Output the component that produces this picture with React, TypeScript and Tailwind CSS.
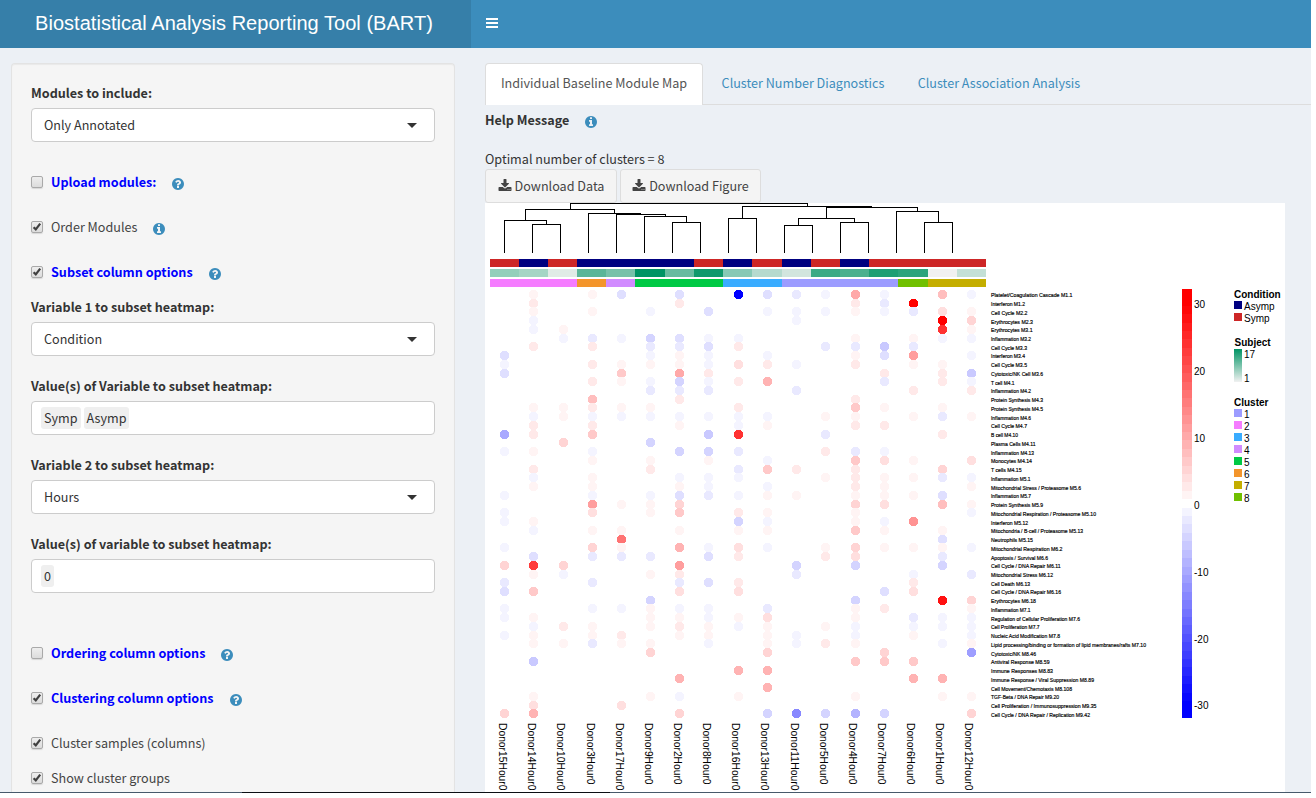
import type { ReactNode } from "react";

const INFO =
  "M1152 1376v-160q0-14-9-23t-23-9h-96v-512q0-14-9-23t-23-9h-320q-14 0-23 9t-9 23v160q0 14 9 23t23 9h96v320h-96q-14 0-23 9t-9 23v160q0 14 9 23t23 9h448q14 0 23-9t9-23zm-128-896v-160q0-14-9-23t-23-9h-192q-14 0-23 9t-9 23v160q0 14 9 23t23 9h192q14 0 23-9t9-23zm640 416q0 209-103 385.5t-279.5 279.5-385.5 103-385.5-103-279.5-279.5-103-385.5 103-385.5 279.5-279.5 385.5-103 385.5 103 279.5 279.5 103 385.5z";
const QUESTION =
  "M1024 1376v-192q0-14-9-23t-23-9h-192q-14 0-23 9t-9 23v192q0 14 9 23t23 9h192q14 0 23-9t9-23zm256-672q0-88-55.5-163t-138.5-116-170-41q-243 0-371 213-15 24 8 42l132 100q7 6 19 6 16 0 25-12 53-68 86-92 34-24 86-24 48 0 85.5 26t37.5 59q0 38-20 61t-68 45q-63 28-115.5 86.5t-52.5 125.5v36q0 14 9 23t23 9h192q14 0 23-9t9-23q0-19 21.5-49.5t54.5-49.5q32-18 49-28.5t46-35 44.5-48 28-60.5 12.5-81zm384 192q0 209-103 385.5t-279.5 279.5-385.5 103-385.5-103-279.5-279.5-103-385.5 103-385.5 279.5-279.5 385.5-103 385.5 103 279.5 279.5 103 385.5z";
const DOWNLOAD =
  "M1344 1344q0-26-19-45t-45-19-45 19-19 45 19 45 45 19 45-19 19-45zm256 0q0-26-19-45t-45-19-45 19-19 45 19 45 45 19 45-19 19-45zm128-224v320q0 40-28 68t-68 28h-1472q-40 0-68-28t-28-68v-320q0-40 28-68t68-28h465l135 136q58 56 136 56t136-56l136-136h464q40 0 68 28t28 68zm-325-569q17 41-14 70l-448 448q-18 19-45 19t-45-19l-448-448q-31-29-14-70 17-39 59-39h256v-448q0-26 19-45t45-19h256q26 0 45 19t19 45v448h256q42 0 59 39z";

function Icon({ d, className }: { d: string; className: string }) {
  return (
    <svg viewBox="0 0 1792 1792" fill="currentColor" className={className}>
      <path d={d} />
    </svg>
  );
}

function Check({
  on,
  strong,
  icon,
  className,
  children,
}: {
  on?: boolean;
  strong?: boolean;
  icon?: string;
  className: string;
  children: ReactNode;
}) {
  return (
    <div className={`flex h-5 shrink-0 items-center ${className}`}>
      <span className="flex h-3 w-3 shrink-0 items-center justify-center rounded-[2px] border border-[#a9a9a9] bg-linear-to-b from-[#eeeeee] to-[#dcdcdc] shadow-[0_1px_1px_#d8d8d8]">
        {on && (
          <svg viewBox="0 0 10 10" className="h-[10px] w-[10px]">
            <path d="M1.6 5.2 3.8 7.4 8.2 1.6" fill="none" stroke="#404040" strokeWidth="2.2" />
          </svg>
        )}
      </span>
      <span
        className={
          strong
            ? "ml-2 text-[12.6px] font-bold whitespace-nowrap text-[#0000ff]"
            : "ml-2 text-[12.6px] whitespace-nowrap text-[#444444]"
        }
      >
        {children}
      </span>
      {icon && <Icon d={icon} className="mt-[4px] ml-[15px] h-[14px] w-[14px] text-[#3c8dbc]" />}
    </div>
  );
}

function Field({
  label,
  value,
  tags,
  className,
}: {
  label: string;
  value?: string;
  tags?: string[];
  className: string;
}) {
  return (
    <div className={`shrink-0 ${className}`}>
      <div className="mb-[5px] h-5 text-[12.6px] leading-5 font-bold whitespace-nowrap text-[#333333]">{label}</div>
      <div className="flex h-[34px] items-center rounded-[4px] border border-[#cccccc] bg-white text-[12.6px] text-[#333333]">
        {value && (
          <>
            <span className="ml-3">{value}</span>
            <span className="mr-[17px] ml-auto h-0 w-0 border-x-[5px] border-t-[5px] border-x-transparent border-t-[#333333]" />
          </>
        )}
        {tags && (
          <div className="ml-[9px] flex gap-[3px]">
            {tags.map((t) => (
              <span key={t} className="h-[22px] rounded-[3px] bg-[#efefef] px-[3px] leading-[22px]">
                {t}
              </span>
            ))}
          </div>
        )}
      </div>
    </div>
  );
}

const ROWS: [string, number][] = [
  ["Platelet/Coagulation Cascade M1.1", 81.5],
  ["Interferon M1.2", 34],
  ["Cell Cycle M2.2", 36.5],
  ["Erythrocytes M2.3", 42],
  ["Erythrocytes M3.1", 41.5],
  ["Inflammation M3.2", 40],
  ["Cell Cycle M3.3", 36],
  ["Interferon M3.4", 34],
  ["Cell Cycle M3.5", 36],
  ["Cytotoxic/NK Cell M3.6", 52],
  ["T cell M4.1", 23.5],
  ["Inflammation M4.2", 40],
  ["Protein Synthesis M4.3", 52],
  ["Protein Synthesis M4.5", 52],
  ["Inflammation M4.6", 40],
  ["Cell Cycle M4.7", 36],
  ["B cell M4.10", 27],
  ["Plasma Cells M4.11", 44.5],
  ["Inflammation M4.13", 43],
  ["Monocytes M4.14", 41],
  ["T cells M4.15", 30.5],
  ["Inflammation M5.1", 39.5],
  ["Mitochondrial Stress / Proteasome M5.6", 90],
  ["Inflammation M5.7", 40],
  ["Protein Synthesis M5.9", 52],
  ["Mitochondrial Respiration / Proteasome M5.10", 105],
  ["Interferon M5.12", 37],
  ["Mitochondria / B-cell / Proteasome M5.13", 92],
  ["Neutrophils M5.15", 42],
  ["Mitochondrial Respiration M6.2", 71.5],
  ["Apoptosis / Survival M6.6", 57],
  ["Cell Cycle / DNA Repair M6.11", 69.5],
  ["Mitochondrial Stress M6.12", 62],
  ["Cell Death M6.13", 39],
  ["Cell Cycle / DNA Repair M6.16", 70],
  ["Erythrocytes M6.18", 45],
  ["Inflammation M7.1", 39.5],
  ["Regulation of Cellular Proliferation M7.6", 89],
  ["Cell Proliferation M7.7", 48.5],
  ["Nucleic Acid Modification M7.8", 69],
  ["Lipid processing/binding or formation of lipid membranes/rafts M7.10", 155],
  ["Cytotoxic/NK M8.46", 45],
  ["Antiviral Response M8.59", 58.5],
  ["Immune Responses M8.83", 62],
  ["Immune Response / Viral Suppression M8.89", 103],
  ["Cell Movement/Chemotaxis M8.108", 81],
  ["TGF-Beta / DNA Repair M9.20", 68],
  ["Cell Proliferation / Immunosuppression M9.35", 105.5],
  ["Cell Cycle / DNA Repair / Replication M9.42", 99],
];

const COLS = [
  { id: 15, x: 504, subject: "#93cfbb", symp: true, dots: "7:-3 8:-1 9:-3 16:-8 18:-1 23:-1 25:-1 26:-1 29:-1 31:4 33:-2 34:-3 36:-1 37:-1 39:-1 48:4" },
  { id: 14, x: 533, subject: "#a5d5c5", symp: false, dots: "0:1 1:2 2:1 3:-1 4:-1 6:2 13:1 14:-1 15:2 16:2 18:1 20:2 21:-1 22:1 26:1 27:-1 30:-3 31:18 32:1 34:5 37:1 38:-1 39:1 40:1 42:-5 46:1 47:3 48:7" },
  { id: 10, x: 563, subject: "#e0ebe6", symp: true, dots: "4:1 5:-1 13:1 14:1 17:4 31:4 32:-1 38:2 40:1" },
  { id: 3, x: 592, subject: "#5ab698", symp: false, dots: "0:1 2:1 5:-2 6:2 8:2 10:2 12:6 13:2 14:-1 15:2 16:5 18:-1 19:1 21:1 22:1 23:-1 24:9 25:3 27:1 29:4 30:-2 33:-2 36:-1 38:1 39:1 40:-2" },
  { id: 17, x: 621, subject: "#77c1aa", symp: false, dots: "0:-3 5:-1 8:1 9:5 10:1 13:1 14:-1 24:1 27:1 28:13 29:1 30:-2 36:-1 39:2 40:1 47:3" },
  { id: 9, x: 650, subject: "#009464", symp: false, dots: "2:-1 5:-4 6:-2 7:-1 8:1 10:-1 11:-2 13:1 14:-1 17:-4 19:1 20:2 23:-1 24:1 25:1 30:-2 32:1 35:-4 36:1 37:1 38:1 40:1 41:4 46:1" },
  { id: 2, x: 679, subject: "#68bba0", symp: false, dots: "0:-3 1:2 5:-3 6:-2 7:1 8:1 9:8 10:-4 11:-2 12:2 14:-1 15:1 18:-4 21:-1 22:1 23:-3 24:4 25:5 27:1 29:7 31:9 32:2 33:-2 34:3 36:-1 37:1 38:2 39:1 44:7 46:-1 48:4" },
  { id: 8, x: 708, subject: "#0f996c", symp: true, dots: "2:-3 5:-1 6:-3 7:-1 8:-1 9:2 10:-1 11:-2 14:-1 16:-5 18:-4 19:1 21:-1 22:-1 23:-2 29:-1 30:-3 33:-3 36:-1 37:-1 38:1 39:1 40:-1" },
  { id: 16, x: 738, subject: "#87c9b5", symp: false, dots: "0:-25 5:-1 6:2 8:3 10:2 13:2 14:-1 15:-1 16:19 18:-2 20:-2 21:-1 23:-1 25:2 26:-4 27:1 29:3 30:2 33:2 34:3 37:1 38:-1 43:7 46:1" },
  { id: 13, x: 767, subject: "#b5dace", symp: true, dots: "0:-3 2:-1 7:-1 8:2 10:7 14:-1 15:1 19:-1 20:5 22:-1 23:1 25:1 26:-1 27:1 29:-1 36:-2 37:3 38:1 39:1 40:1 41:4 43:7 45:7 48:-4" },
  { id: 11, x: 796, subject: "#d2e5de", symp: false, dots: "0:-2 2:-1 3:-1 8:-1 11:-2 20:2 23:1 31:-4 32:-2 39:-1 40:-1 48:-11" },
  { id: 5, x: 825, subject: "#3baa85", symp: true, dots: "0:-1 2:-1 6:-2 14:1 16:-2 18:2 21:1 29:1 30:2 38:1 40:2 48:-4" },
  { id: 4, x: 855, subject: "#4bb08f", symp: false, dots: "0:8 1:2 2:1 5:1 6:-2 7:1 8:2 12:2 13:5 14:1 15:2 18:-2 19:5 20:2 21:2 22:2 23:1 24:4 25:1 26:1 27:5 29:4 30:3 31:-4 35:-4 36:1 37:1 38:-1 39:-1 40:1 42:5 46:1 48:-7" },
  { id: 7, x: 884, subject: "#1e9f74", symp: true, dots: "0:-1 1:-2 2:-1 6:-5 7:-3 9:2 10:-2 13:1 15:2 18:-1 19:3 21:1 22:1 23:1 24:3 26:-1 27:1 29:1 34:-3 36:2 41:4 42:5 48:-4" },
  { id: 6, x: 913, subject: "#2ca47c", symp: true, dots: "1:24 2:-2 5:1 6:-2 7:9 8:1 11:2 14:1 19:1 21:1 23:1 26:10 29:1 32:-1 33:2 34:3 37:-2 38:-1 39:1 42:5 44:7" },
  { id: 1, x: 942, subject: "#f1f1f1", symp: true, dots: "0:6 2:3 3:25 4:19 5:-1 8:1 9:2 10:2 13:1 14:-2 16:2 20:4 21:-2 23:-3 24:6 27:1 28:-3 29:1 30:-2 31:-4 35:22 37:-1 38:-1 40:-1 44:7 46:1" },
  { id: 12, x: 971, subject: "#c4e0d6", symp: true, dots: "0:-1 2:1 3:4 4:1 5:-1 7:-1 9:-5 10:-1 11:2 14:1 19:3 21:-1 22:1 24:1 25:-1 29:-1 32:-2 35:4 36:1 37:-1 38:-1 39:-1 40:1 41:-9 46:1 48:4" },
];

const EDGES = [490, 519, 548, 577, 606, 635, 665, 694, 723, 752, 782, 811, 840, 869, 898, 928, 957, 986];

const CLUSTER_BANDS: [number, number, string][] = [
  [0, 3, "#f57cff"],
  [3, 4, "#f3952b"],
  [4, 5, "#d18bff"],
  [5, 8, "#00c944"],
  [8, 10, "#39acff"],
  [10, 14, "#9c9cff"],
  [14, 15, "#70c000"],
  [15, 17, "#c4ae00"],
];

const CLUSTERS = ["#9c9cff", "#f57cff", "#39acff", "#d18bff", "#00c944", "#f3952b", "#c4ae00", "#70c000"];

// Each branch: left x, right x, height, foot of the left leg, foot of the right leg.
const BRANCHES = [
  [570, 807, 203, 209, 206],
  [525, 614, 209, 220, 213],
  [504, 546, 220, 252, 224],
  [532, 560, 224, 252, 252],
  [588, 640, 213, 252, 214],
  [616, 665, 214, 252, 216],
  [644, 686, 216, 252, 222],
  [672, 700, 222, 252, 252],
  [742, 871, 206, 218, 207],
  [728, 756, 218, 252, 252],
  [826, 917, 207, 218, 211],
  [798, 854, 218, 225, 222],
  [784, 812, 225, 252, 252],
  [840, 868, 222, 252, 252],
  [896, 938, 211, 252, 222],
  [924, 952, 222, 252, 252],
];

function shade(level: number) {
  const v = Math.max(0, Math.round(255 - Math.abs(level) * 10.8));
  return level > 0 ? `rgb(255,${v},${v})` : level < 0 ? `rgb(${v},${v},255)` : "#ffffff";
}

function Heatmap() {
  return (
    <svg
      viewBox="485 203 800 589"
      className="block h-[589px] w-[800px] shrink-0 bg-white font-['Liberation_Sans',sans-serif]"
    >
      <path
        d={BRANCHES.map(([a, b, y, l, r]) => `M${a + 0.5} ${l + 0.5}V${y + 0.5}H${b + 0.5}V${r + 0.5}`).join("")}
        fill="none"
        stroke="#000"
        shapeRendering="crispEdges"
      />
      <g shapeRendering="crispEdges">
        {COLS.map((c, i) => (
          <g key={c.id}>
            <rect x={EDGES[i]} y={259} width={EDGES[i + 1] - EDGES[i]} height={8} fill={c.symp ? "#cd2626" : "#000080"} />
            <rect x={EDGES[i]} y={269} width={EDGES[i + 1] - EDGES[i]} height={8} fill={c.subject} />
          </g>
        ))}
        {CLUSTER_BANDS.map(([a, b, f]) => (
          <rect key={a} x={EDGES[a]} y={279} width={EDGES[b] - EDGES[a]} height={8} fill={f} />
        ))}
        {COLS.map((c) =>
          c.dots.split(" ").map((p) => {
            const [row, level] = p.split(":").map(Number);
            return (
              <circle
                key={`${c.id}-${row}`}
                cx={c.x + 0.5}
                cy={Math.floor(290.35 + 8.74 * row) + 4.5}
                r={4.6}
                fill={shade(level)}
              />
            );
          }),
        )}
        {Array.from({ length: 51 }, (_, i) => (
          <rect
            key={i}
            x={1182}
            y={Math.round(289 + i * 8.41)}
            width={10}
            height={Math.round(289 + (i + 1) * 8.41) - Math.round(289 + i * 8.41)}
            fill={shade(25 - i)}
          />
        ))}
      </g>
      <g fontSize="5.6" fill="#000" stroke="#000" strokeWidth="0.18">
        {ROWS.map(([name, w], i) => (
          <text key={name} x={991} y={297.3 + 8.74 * i} textLength={w} lengthAdjust="spacingAndGlyphs">
            {name}
          </text>
        ))}
      </g>
      <g fontSize="10" fill="#000">
        {COLS.map((c, i) => (
          <text
            key={c.id}
            transform={`translate(${Math.round(499.1 + 29.14 * i)} 723) rotate(90)`}
            textLength={c.id > 9 ? 67.5 : 61.5}
            lengthAdjust="spacingAndGlyphs"
          >
            {`Donor${c.id}Hour0`}
          </text>
        ))}
        {[30, 20, 10, 0, -10, -20, -30].map((t, i) => (
          <text key={t} x={1194} y={308 + Math.round(66.9 * i)}>
            {t}
          </text>
        ))}
        <text x={1234} y={298} fontWeight="700">
          Condition
        </text>
        <rect x={1234} y={301} width={8} height={8} fill="#000080" />
        <text x={1244} y={310}>
          Asymp
        </text>
        <rect x={1234} y={313} width={8} height={8} fill="#cd2626" />
        <text x={1244} y={322}>
          Symp
        </text>
        <text x={1234.5} y={346} fontWeight="700">
          Subject
        </text>
        <linearGradient id="subject" x1="0" y1="0" x2="0" y2="1">
          <stop offset="0" stopColor="#009464" />
          <stop offset="1" stopColor="#f1f1f1" />
        </linearGradient>
        <rect x={1234} y={349} width={8} height={33} fill="url(#subject)" />
        <text x={1244} y={358}>
          17
        </text>
        <text x={1244} y={382}>
          1
        </text>
        <text x={1234} y={406} fontWeight="700">
          Cluster
        </text>
        {CLUSTERS.map((f, i) => (
          <g key={f}>
            <rect x={1234} y={409 + 12 * i} width={8} height={8} fill={f} />
            <text x={1244} y={418 + 12 * i}>
              {i + 1}
            </text>
          </g>
        ))}
      </g>
    </svg>
  );
}

export default function App() {
  return (
    <div className="h-[798px] w-[1316px] overflow-hidden bg-white font-['Noto_Sans_CJK_SC',sans-serif]">
      <div className="flex h-[792px] w-[1311px] flex-col overflow-hidden bg-[#ecf0f5]">
        <header className="flex h-12 shrink-0 bg-[#3c8dbc] text-white">
          <div className="flex w-[471px] items-center justify-center bg-[#367fa9] pr-[3px] pb-[2px] font-['Liberation_Sans',sans-serif] text-[20px] tracking-[0.04px] whitespace-nowrap">
            Biostatistical Analysis Reporting Tool (BART)
          </div>
          <div className="flex flex-col gap-[2px] pt-[18px] pl-[15px]">
            <span className="h-[2px] w-3 bg-white" />
            <span className="h-[2px] w-3 bg-white" />
            <span className="h-[2px] w-3 bg-white" />
          </div>
        </header>
        <div className="flex min-h-0 flex-1">
          <aside className="mt-[15px] ml-[11px] flex w-[444px] shrink-0 flex-col rounded-t-[4px] border border-b-0 border-[#e3e3e3] bg-[#f5f5f5] px-[19px] pt-[19px] shadow-[inset_0_1px_1px_rgba(0,0,0,0.05)]">
            <Field className="" label="Modules to include:" value="Only Annotated" />
            <Check className="mt-[30px]" strong icon={QUESTION}>
              Upload modules:
            </Check>
            <Check className="mt-[25px]" on icon={INFO}>
              Order Modules
            </Check>
            <Check className="mt-[25px]" on strong icon={QUESTION}>
              Subset column options
            </Check>
            <Field className="mt-[15px]" label="Variable 1 to subset heatmap:" value="Condition" />
            <Field className="mt-5" label="Value(s) of Variable to subset heatmap:" tags={["Symp", "Asymp"]} />
            <Field className="mt-5" label="Variable 2 to subset heatmap:" value="Hours" />
            <Field className="mt-5" label="Value(s) of variable to subset heatmap:" tags={["0"]} />
            <Check className="mt-[50px]" strong icon={QUESTION}>
              Ordering column options
            </Check>
            <Check className="mt-[25px]" on strong icon={QUESTION}>
              Clustering column options
            </Check>
            <Check className="mt-[25px]" on>
              Cluster samples (columns)
            </Check>
            <Check className="mt-[15px]" on>
              Show cluster groups
            </Check>
          </aside>
          <main className="ml-[30px] flex min-w-0 flex-1 flex-col pt-[15px] text-[12.6px] text-[#333333]">
            <nav className="flex h-[42px] shrink-0 items-end border-b border-[#dddddd]">
              <div className="-mb-px flex h-[42px] w-[218px] items-center justify-center rounded-t-[4px] border border-b-0 border-[#dddddd] bg-white pb-[2px] whitespace-nowrap text-[#555555]">
                Individual Baseline Module Map
              </div>
              <div className="flex h-[41px] w-[197px] items-center justify-center pl-[3px] whitespace-nowrap text-[#3c8dbc]">
                Cluster Number Diagnostics
              </div>
              <div className="flex h-[41px] w-[197px] items-center justify-center pl-px whitespace-nowrap text-[#3c8dbc]">
                Cluster Association Analysis
              </div>
            </nav>
            <div className="mt-[5px] flex h-5 shrink-0 items-center">
              <span className="font-bold">Help Message</span>
              <Icon d={INFO} className="mt-[4px] ml-[15px] h-[14px] w-[14px] text-[#3c8dbc]" />
            </div>
            <div className="mt-[19px] h-5 shrink-0 leading-5">Optimal number of clusters = 8</div>
            <div className="flex h-[34px] shrink-0 gap-[3px] text-[#444444]">
              {["Download Data", "Download Figure"].map((t, i) => (
                <div
                  key={t}
                  className={
                    i === 0
                      ? "flex w-[132px] items-center justify-center rounded-[3px] border border-[#dddddd] bg-[#f4f4f4] whitespace-nowrap"
                      : "flex w-[141px] items-center justify-center rounded-[3px] border border-[#dddddd] bg-[#f4f4f4] whitespace-nowrap"
                  }
                >
                  <Icon d={DOWNLOAD} className="mr-[3px] h-[14px] w-[14px]" />
                  {t}
                </div>
              ))}
            </div>
            <Heatmap />
          </main>
        </div>
      </div>
      <div className="flex h-px w-[1311px] bg-[#47596b]">
        <div className="ml-[242px] w-[368px] bg-[#0b0f14]" />
      </div>
    </div>
  );
}
